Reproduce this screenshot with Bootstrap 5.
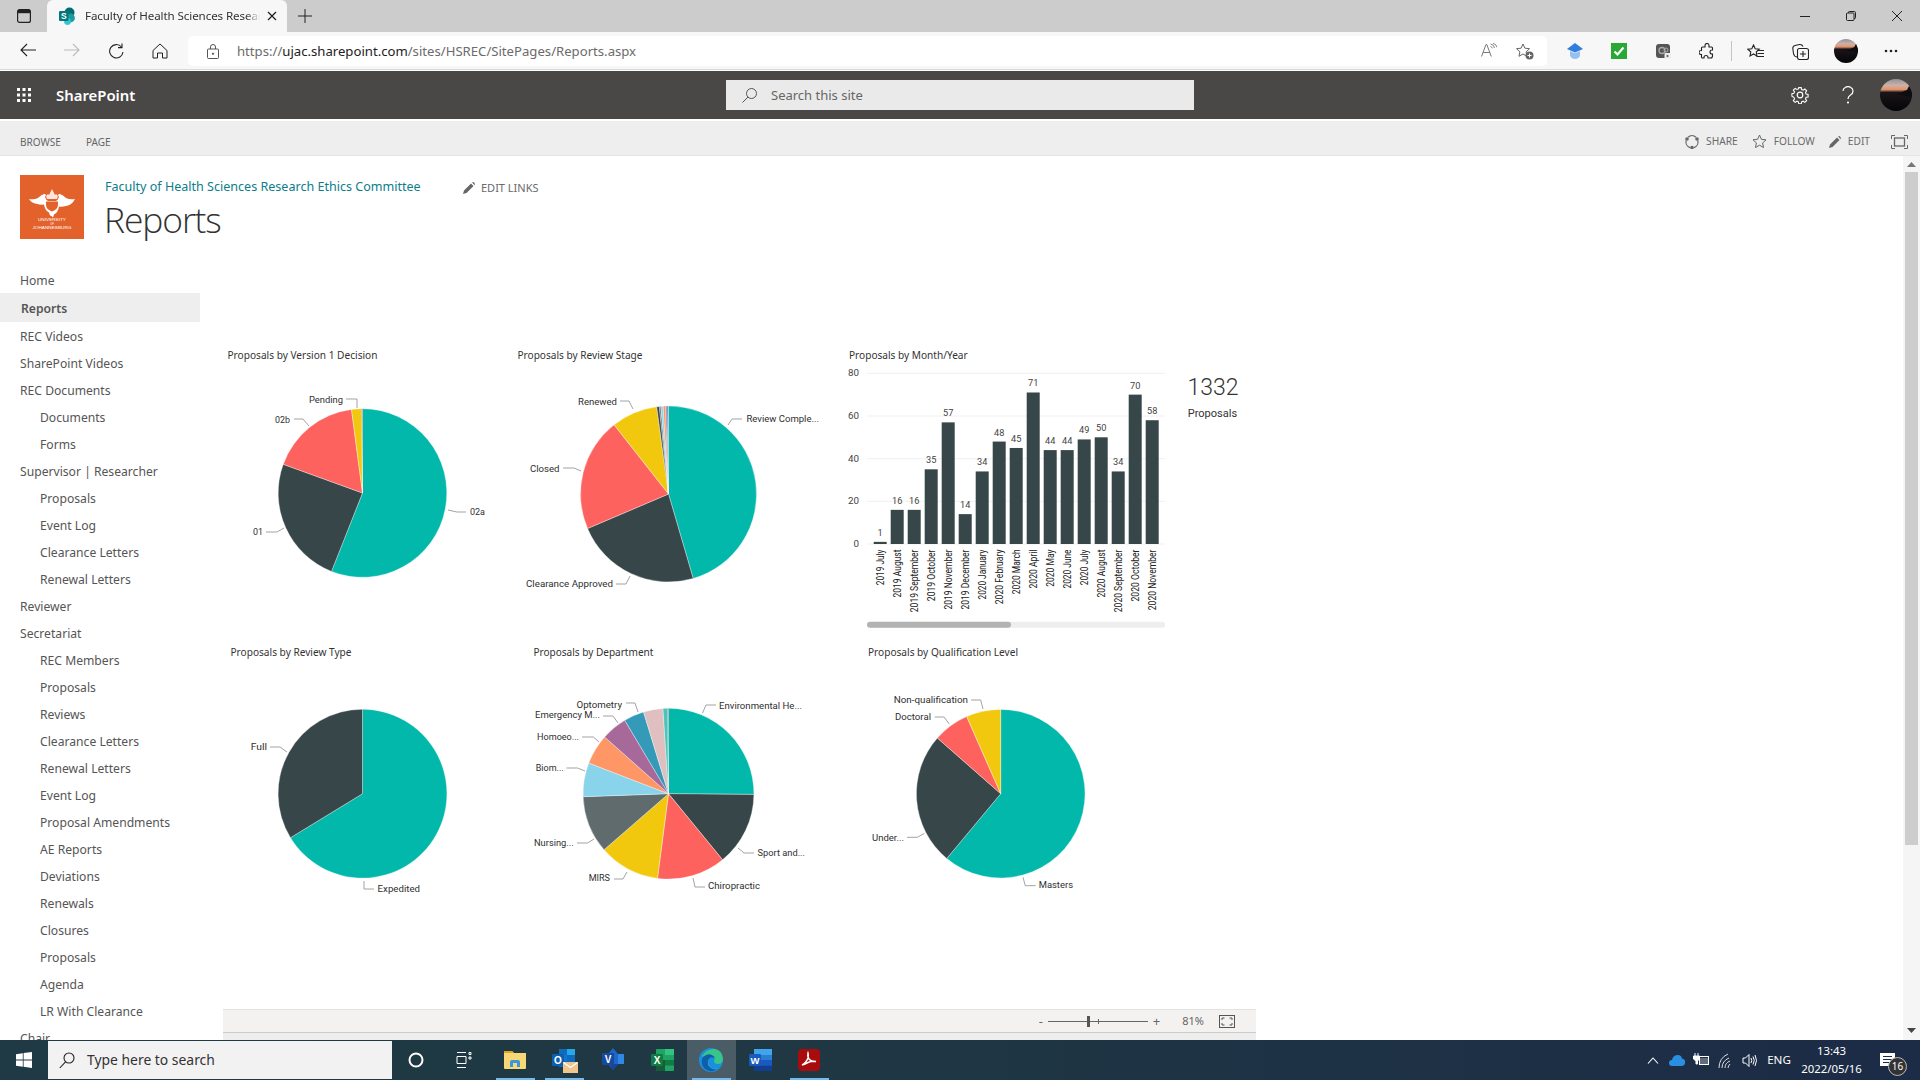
<!DOCTYPE html>
<html lang="en">
<head>
<meta charset="utf-8">
<title>Reports</title>
<link href="https://cdn.jsdelivr.net/npm/bootstrap@5.3.0/dist/css/bootstrap.min.css" rel="stylesheet">
<style>
html,body{height:100%;overflow:hidden;background:#fff}
body{font-family:"Noto Sans","Open Sans",sans-serif;color:#444;width:1920px;height:1080px}
svg{display:block;flex:none}
/* browser chrome */
.tabstrip{height:32px;background:#ccc}
.strip-btn{width:47px}
.brow-tab{width:240px;background:#f7f7f7;border-radius:6px 6px 0 0;padding-left:11px;font-size:11.6px;color:#333;letter-spacing:-.1px}
.brow-tab .tab-title{width:175px;margin-left:9px;white-space:nowrap;overflow:hidden;-webkit-mask-image:linear-gradient(90deg,#000 92%,transparent)}
.tab-close{margin-left:7px}
.newtab-btn{width:35px}
.win-btn{width:46px}
.toolbar{height:38px;background:#f7f7f7;border-bottom:1px solid #d9d9d9;padding-top:1px;padding-left:6px}
.tool-btn{width:44px}
.tool-btn2{width:45px}
.addr{width:1359px;height:30px;background:#fff;border-radius:5px;margin:0 6px}
.addr .lock{width:49px}
.addr .url{font-size:13.15px;color:#6b6b6b;white-space:nowrap;padding-top:2px}
.addr .url b{font-weight:400;color:#222}
.addr .addr-btn{width:36px}
.tool-div{width:4px}
.tool-div i{display:block;width:1px;height:20px;background:#c4c4c4;margin:0 auto}
/* sharepoint */
.sp-bar{height:48px;margin-top:1px;background:#4a4847;color:#fff}
.sp-left{width:726px}
.sp-waffle{width:48px}
.sp-brand{font-size:14.9px;font-weight:600;margin-left:8px;color:#fff;padding-top:1px}
.sp-search{width:468px;height:30px;background:#ebeaea;color:#666;font-size:13px;padding-left:16px;gap:14px}
.sp-search span{padding-top:2px}
.sp-btn{width:48px}
.ribbon{height:35px;margin-top:2px;background:#eee;border-bottom:1px solid #e4e4e4;font-size:10px;color:#666;padding-top:8px}
.rib-tab-a{margin-left:20px;width:66px}
.rib-act{gap:3px;font-size:10.2px;color:#6a6a6a}
.rib-act + .rib-act{margin-left:14px}
.rib-focus{margin-left:21px;margin-right:12px}
/* page */
.page-body{height:884px;overflow:hidden}
.page-main{width:1903px;overflow:hidden}
.page-head{height:111px;padding:19px 0 0 20px}
.site-text{margin-left:21px}
.site-name{font-size:12.55px;line-height:16px;color:#0d7d8c;white-space:nowrap;padding-top:4px;width:358px}
.page-name{font-family:"Open Sans",sans-serif;font-weight:300;font-size:35.4px;line-height:44px;color:#333;margin-top:1px;margin-left:-1px;letter-spacing:-1.100px}
.edit-links{font-size:11px;color:#6a6a6a;line-height:16px;gap:6px;padding-top:5px;height:21px}
.side-col{width:200px}
.side-nav{font-size:12.15px;color:#555}
.side-nav .nav-link{padding:0 0 0 20px;height:27px;line-height:27px;color:#555;white-space:nowrap}
.side-nav .nav-link.sub{padding-left:40px}
.side-nav .nav-link.on{background:#eee;height:29px;line-height:31px;padding-left:21px;font-weight:600;margin:-1px 0 1px}
.report-col{width:1033px;margin-left:23px}
.rep-bar{height:24px;background:#f3f2f1;border-top:1px solid #e3e3e3;border-bottom:1px solid #ccc;font-size:11px;color:#666;padding-right:21px}
.rep-sign{font-size:13px;line-height:1}
.rep-rest{height:20px;background:#eee}
.zoom-track{width:100px;height:1px;background:#666;margin:0 5px}
.zoom-knob{left:39px;top:-5px;width:3px;height:11px;background:#555}
.zoom-tick{left:50px;top:-2px;width:1px;height:5px;background:#666}
.zoom-pct{margin:0 15px 0 22px}
.scroll-col{width:17px;background:#f5f5f5}
.scroll-up{height:16px}
.scroll-thumb{height:673px;width:13px;background:#cdcdcd;margin:0 auto}
.scroll-down{margin-top:183px}
/* taskbar */
.taskbar{height:40px;background:linear-gradient(90deg,#1f3a44,#1f3843 40%,#1c2b46);color:#fff}
.start-btn{width:48px}
.task-search{width:344px;background:#f2f2f2;color:#333;font-size:13.9px;margin:1px 0;padding-left:11px;gap:12px}
.task-sys{width:48px}
.task-first{margin-left:2.5px}
.task-app{width:49px;height:40px}
.task-app.active{background:#4a5d66}
.task-app.run::after{content:"";position:absolute;left:5px;right:5px;bottom:0;height:2px;background:#76b9ed}
.tray-ic{width:24px}
.tray-eng{width:36px;font-size:11.6px;text-align:center}
.tray-clock{width:69px;font-size:11.4px;text-align:center;line-height:18px}
.tray-note{width:42px}
.tray-badge{right:1px;bottom:4px;width:19px;height:19px;border-radius:50%;background:#333;border:1px solid #bbb;font-size:10px;line-height:17px;text-align:center;color:#fff}
.tray-end{width:12px}
#canvas text{font-family:Roboto,"Liberation Sans",sans-serif}
#canvas text.ttl{font-family:"Noto Sans",sans-serif;font-size:10.3px;fill:#333}
</style>
</head>
<body>
<div class="d-flex flex-column">

<div class="tabstrip d-flex">
  <div class="strip-btn d-flex align-items-center justify-content-center">
    <svg width="14" height="14" viewBox="0 0 14 14" fill="none" stroke="#222" stroke-width="1.2"><rect x=".6" y=".6" width="12.8" height="12.8" rx="2"/><path d="M1 2.500h12" stroke-width="3.400"/></svg>
  </div>
  <div class="brow-tab d-flex align-items-center">
    <svg width="18" height="18" viewBox="0 0 18 18"><circle cx="11.500" cy="5.500" r="5" fill="#036c70"/><circle cx="12.500" cy="11" r="4.400" fill="#1a9ba1"/><circle cx="9.500" cy="14.500" r="3.400" fill="#37c6d0"/><rect x="1" y="4" width="9.500" height="10" rx="1" fill="#03787c"/><text x="5.700" y="12" font-size="8.500" font-weight="700" fill="#fff" text-anchor="middle" font-family="Liberation Sans">S</text></svg>
    <span class="tab-title">Faculty of Health Sciences Research Ethics Committee</span>
    <svg class="tab-close" width="10" height="10" viewBox="0 0 10 10" stroke="#222" stroke-width="1.300"><path d="M1 1l8 8M9 1l-8 8"/></svg>
  </div>
  <div class="newtab-btn d-flex align-items-center justify-content-center">
    <svg width="14" height="14" viewBox="0 0 14 14" stroke="#222" stroke-width="1"><path d="M7 0v14M0 7h14"/></svg>
  </div>
  <div class="ms-auto d-flex">
    <div class="win-btn d-flex align-items-center justify-content-center"><svg width="10" height="10" viewBox="0 0 10 10" stroke="#222"><path d="M0 5.500h10"/></svg></div>
    <div class="win-btn d-flex align-items-center justify-content-center"><svg width="10" height="10" viewBox="0 0 10 10" fill="none" stroke="#222"><rect x=".5" y="2" width="7.500" height="7.500" rx="1"/><path d="M2.500 2V1.300q0-.8.8-.8h5q1.200 0 1.200 1.200v5q0 .8-.8.8H8"/></svg></div>
    <div class="win-btn d-flex align-items-center justify-content-center"><svg width="10" height="10" viewBox="0 0 10 10" stroke="#222"><path d="M0 0l10 10M10 0L0 10"/></svg></div>
  </div>
</div>

<div class="toolbar d-flex align-items-center">
  <div class="d-flex">
    <div class="tool-btn d-flex justify-content-center"><svg width="16" height="14" viewBox="0 0 16 14" fill="none" stroke="#222" stroke-width="1.100"><path d="M16 7H1M7 1L1 7l6 6"/></svg></div>
    <div class="tool-btn d-flex justify-content-center"><svg width="16" height="14" viewBox="0 0 16 14" fill="none" stroke="#bbb" stroke-width="1.100"><path d="M0 7h15M9 1l6 6-6 6"/></svg></div>
    <div class="tool-btn d-flex justify-content-center"><svg width="16" height="16" viewBox="0 0 16 16" fill="none" stroke="#222" stroke-width="1.100"><path d="M13.500 4A6.700 6.700 0 1 0 15 9"/><path d="M14 .5V4.600H10"/></svg></div>
    <div class="tool-btn d-flex justify-content-center"><svg width="16" height="16" viewBox="0 0 16 16" fill="none" stroke="#222" stroke-width="1"><path d="M1 7.500L8 1l7 6.500V15h-4.500V10h-5v5H1z"/></svg></div>
  </div>
  <div class="addr d-flex align-items-center">
    <div class="lock d-flex justify-content-center"><svg width="12" height="15" viewBox="0 0 12 15" fill="none" stroke="#555"><rect x=".5" y="5" width="11" height="9.500" rx="1"/><path d="M3.500 5V3a2.500 2.500 0 0 1 5 0v2"/><circle cx="6" cy="9.700" r=".7" fill="#555"/></svg></div>
    <span class="url">https://<b>ujac.sharepoint.com</b>/sites/HSREC/SitePages/Reports.aspx</span>
    <div class="ms-auto d-flex me-1">
      <div class="addr-btn d-flex justify-content-center"><svg width="16" height="14" viewBox="0 0 16 14" fill="none" stroke="#777"><path d="M.5 13.500L5 1.500h.8l4.500 12M2.200 9.500h6.800"/><path d="M9.500 1q3.500.5 4 4M9.500 3.500q1.500.3 1.800 1.800M12 .3q3.500.8 3.800 4" stroke-width=".9"/></svg></div>
      <div class="addr-btn d-flex justify-content-center"><svg width="18" height="17" viewBox="0 0 18 17"><path d="M7 1l1.900 4.200 4.600.5-3.400 3.100.9 4.500L7 11l-4 2.300.9-4.500L.5 5.700l4.600-.5z" fill="none" stroke="#666"/><circle cx="13.500" cy="12.500" r="4" fill="#666"/><path d="M13.500 10.500v4M11.500 12.500h4" stroke="#fff"/></svg></div>
    </div>
  </div>
  <div class="tool-btn d-flex justify-content-center"><svg width="16" height="16" viewBox="0 0 16 16"><path d="M8 0l8 6-8 3.500L0 6z" fill="#2f7ddd"/><path d="M3 8l5 2.200L13 8v4a5 4 0 0 1-10 0z" fill="#94c0f2"/></svg></div>
  <div class="tool-btn d-flex justify-content-center"><svg width="16" height="16" viewBox="0 0 16 16"><rect width="16" height="16" fill="#2aa836"/><path d="M3.500 8.500l3 3 6-7" fill="none" stroke="#fff" stroke-width="2.200"/></svg></div>
  <div class="tool-btn d-flex justify-content-center"><svg width="15" height="15" viewBox="0 0 15 15"><rect width="14" height="14" rx="3" fill="#555"/><circle cx="6" cy="6.500" r="3" fill="none" stroke="#aaa" stroke-width="1.300"/><circle cx="10" cy="6" r="2" fill="none" stroke="#aaa"/><rect x="8.500" y="9" width="6.500" height="6" rx="1" fill="#eee"/><path d="M10.700 10.500l2.300 1.500-2.300 1.500z" fill="#555"/></svg></div>
  <div class="tool-btn d-flex justify-content-center"><svg width="16" height="16" viewBox="0 0 16 16" fill="none" stroke="#222" stroke-width="1.100"><path d="M6 2.500a2 2 0 0 1 4 0V4h2.500q1 0 1 1v2h-.5a2 2 0 0 0 0 4h.5v2q0 2-2 2H9v-.5a2 2 0 0 0-4 0v.5H3.500q-1 0-1-1v-2.500H2a2 2 0 0 1 0-4h.5V5q0-1 1-1H6z"/></svg></div>
  <div class="tool-div"><i></i></div>
  <div class="tool-btn2 d-flex justify-content-center"><svg width="17" height="15" viewBox="0 0 17 15" fill="none" stroke="#222" stroke-width="1.100"><path d="M6.500 1l1.700 3.700 4 .5-3 2.800.8 4-3.500-2-3.500 2 .8-4-3-2.800 4-.5z"/><path d="M11 6.500h6M10.500 9.500h6.500M9.500 12.500h7.500"/></svg></div>
  <div class="tool-btn2 d-flex justify-content-center"><svg width="17" height="17" viewBox="0 0 17 17" fill="none" stroke="#222" stroke-width="1.100"><rect x="5.500" y="5.500" width="11" height="11" rx="2"/><path d="M11 8v6M8 11h6M5 14Q2 13.500 1.500 10.500L.8 5.500Q.7 3 3 2.500l4.500-1q2.500-.3 3.500 2"/></svg></div>
  <div class="tool-btn2 d-flex justify-content-center"><svg width="24" height="24" viewBox="0 0 32 32"><defs><clipPath id="av1"><circle cx="16" cy="16" r="16"/></clipPath><linearGradient id="sky1" x1="0" y1="0" x2="0" y2="1"><stop offset="0" stop-color="#8f949c"/><stop offset=".2" stop-color="#cfb0a6"/><stop offset=".33" stop-color="#e2936a"/><stop offset=".42" stop-color="#1a1518"/><stop offset="1" stop-color="#050508"/></linearGradient></defs><g clip-path="url(#av1)"><rect width="32" height="32" fill="url(#sky1)"/><path d="M32 18V6l-3 1-2 4-3 1-3 2-6 1z" fill="#0d0d12"/></g></svg></div>
  <div class="tool-btn2 d-flex justify-content-center"><svg width="14" height="4" viewBox="0 0 14 4" fill="#222"><circle cx="2" cy="2" r="1.300"/><circle cx="7" cy="2" r="1.300"/><circle cx="12" cy="2" r="1.300"/></svg></div>
</div>

<div class="sp-bar d-flex align-items-center">
  <div class="sp-left d-flex align-items-center">
    <div class="sp-waffle d-flex justify-content-center"><svg width="16" height="16" viewBox="0 0 16 16" fill="#fff"><path d="M1 1h3v3H1zM6.500 1h3v3h-3zM12 1h3v3h-3zM1 6.500h3v3H1zM6.500 6.500h3v3h-3zM12 6.500h3v3h-3zM1 12h3v3H1zM6.500 12h3v3h-3zM12 12h3v3h-3z"/></svg></div>
    <span class="sp-brand">SharePoint</span>
  </div>
  <div class="sp-search d-flex align-items-center">
    <svg width="15" height="15" viewBox="0 0 15 15" fill="none" stroke="#555"><circle cx="9.500" cy="5.500" r="5"/><path d="M6 9L.5 14.500"/></svg>
    <span>Search this site</span>
  </div>
  <div class="ms-auto d-flex align-items-center">
    <div class="sp-btn d-flex justify-content-center"><svg width="18" height="18" viewBox="0 0 18 18" fill="none" stroke="#fff" stroke-width="1.200"><circle cx="9" cy="9" r="2.800"/><path d="M7.600 .8h2.800l.4 2.200 1.700.7 1.900-1.300 2 2-1.300 1.900.7 1.700 2.200.4v2.800l-2.200.4-.7 1.700 1.300 1.900-2 2-1.900-1.300-1.700.7-.4 2.200H7.600l-.4-2.200-1.700-.7-1.900 1.300-2-2 1.300-1.900-.7-1.700L0 10.400V7.600l2.200-.4.700-1.700-1.300-1.900 2-2 1.900 1.300 1.700-.7z" transform="translate(.9 .9) scale(.9)"/></svg></div>
    <div class="sp-btn d-flex justify-content-center"><svg width="12" height="18" viewBox="0 0 12 18" fill="none" stroke="#fff" stroke-width="1.200"><path d="M1 5a5 4.500 0 1 1 7.500 4Q6 10.500 6 13"/><circle cx="6" cy="16.500" r=".5" fill="#fff"/></svg></div>
    <div class="sp-btn d-flex justify-content-center"><svg width="32" height="32" viewBox="0 0 32 32"><defs><clipPath id="av2"><circle cx="16" cy="16" r="16"/></clipPath><linearGradient id="sky2" x1="0" y1="0" x2="0" y2="1"><stop offset="0" stop-color="#8f949c"/><stop offset=".2" stop-color="#cfb0a6"/><stop offset=".33" stop-color="#e2936a"/><stop offset=".42" stop-color="#1a1518"/><stop offset="1" stop-color="#050508"/></linearGradient></defs><g clip-path="url(#av2)"><rect width="32" height="32" fill="url(#sky2)"/><path d="M32 18V6l-3 1-2 4-3 1-3 2-6 1z" fill="#0d0d12"/></g></svg></div>
  </div>
</div>

<div class="ribbon d-flex align-items-center">
  <span class="rib-tab-a">BROWSE</span>
  <span>PAGE</span>
  <div class="ms-auto d-flex align-items-center">
    <div class="rib-act d-flex align-items-center"><svg width="14" height="14" viewBox="0 0 14 14" fill="none" stroke="#666" stroke-width="1.200"><path d="M3 2.200A6 6 0 0 1 11 2.200M12.800 5.500A6 6 0 0 1 9 12.600M5 12.600A6 6 0 0 1 1.200 5.500"/><g fill="#666" stroke="none"><circle cx="2" cy="4" r="1.800"/><circle cx="12" cy="4" r="1.800"/><circle cx="7" cy="12.500" r="1.800"/></g></svg><span class="ms-1">SHARE</span></div>
    <div class="rib-act d-flex align-items-center"><svg width="15" height="15" viewBox="0 0 15 15" fill="none" stroke="#666"><path d="M7.500 1l1.900 4.300 4.600.5-3.400 3.100.9 4.600-4-2.300-4 2.300.9-4.600L1 5.800l4.600-.5z"/></svg><span class="ms-1">FOLLOW</span></div>
    <div class="rib-act d-flex align-items-center"><svg width="12" height="12" viewBox="0 0 12 12" fill="#666"><path d="M0 12l1-3.500 7-7L10.500 4l-7 7zM9 .5l2.500 2.500 .5-.5Q12 1 10.500 0z"/></svg><span class="ms-1">EDIT</span></div>
    <div class="rib-focus"><svg width="17" height="14" viewBox="0 0 17 14" fill="none" stroke="#666"><path d="M.5 4V.5H4M13 .5h3.500V4M16.500 10v3.500H13M4 13.500H.5V10"/><rect x="3.500" y="3" width="10" height="8" stroke-width="1.300"/></svg></div>
  </div>
</div>

<div class="page-body d-flex">
  <div class="page-main">
    <div class="page-head d-flex align-items-start">
      <svg width="64" height="64" viewBox="0 0 64 64">
        <rect width="64" height="64" fill="#e3622c"/>
        <path d="M9 24q5 1 9-1 3-3 6-4 3-.5 1 3 1 3 3 4h8q2-1 3-4-2-3.500 1-3 3 1 6 4 4 2 9 1-3 6-9 7-4 1-7 .5-1 6-5 8l-1 3-1.500-1.500L30 40.500l-1-3q-4-2-5-8-3 .5-7-.5-6-1-8-5z" fill="#fff"/>
        <path d="M26 26.500h12v3q0 5-6 7-6-2-6-7z" fill="#e3622c"/>
        <path d="M26 21l2-2 1 1 3-6 3 6 1-1 2 2-1 3H27z" fill="#fff" opacity=".85"/>
        <g fill="#fff" text-anchor="middle" font-family="Liberation Sans, sans-serif" font-size="3.800">
          <text x="32" y="46" textLength="28" lengthAdjust="spacingAndGlyphs">UNIVERSITY</text>
          <text x="32" y="49.500" font-size="2.600">OF</text>
          <text x="32" y="53.500" textLength="39" lengthAdjust="spacingAndGlyphs">JOHANNESBURG</text>
        </g>
      </svg>
      <div class="site-text">
        <div class="d-flex">
          <div class="site-name">Faculty of Health Sciences Research Ethics Committee</div>
          <div class="edit-links d-flex align-items-center"><svg width="12" height="12" viewBox="0 0 12 12" fill="#666"><path d="M0 12l1-3.500 7-7L10.500 4l-7 7zM9 .5l2.500 2.500 .5-.5Q12 1 10.500 0z"/></svg><span>EDIT LINKS</span></div>
        </div>
        <div class="page-name">Reports</div>
      </div>
    </div>
    <div class="d-flex">
      <div class="side-col">
        <nav class="nav flex-column side-nav">
          <a class="nav-link" href="#">Home</a>
          <a class="nav-link on" href="#">Reports</a>
          <a class="nav-link" href="#">REC Videos</a>
          <a class="nav-link" href="#">SharePoint Videos</a>
          <a class="nav-link" href="#">REC Documents</a>
          <a class="nav-link sub" href="#">Documents</a>
          <a class="nav-link sub" href="#">Forms</a>
          <a class="nav-link" href="#">Supervisor | Researcher</a>
          <a class="nav-link sub" href="#">Proposals</a>
          <a class="nav-link sub" href="#">Event Log</a>
          <a class="nav-link sub" href="#">Clearance Letters</a>
          <a class="nav-link sub" href="#">Renewal Letters</a>
          <a class="nav-link" href="#">Reviewer</a>
          <a class="nav-link" href="#">Secretariat</a>
          <a class="nav-link sub" href="#">REC Members</a>
          <a class="nav-link sub" href="#">Proposals</a>
          <a class="nav-link sub" href="#">Reviews</a>
          <a class="nav-link sub" href="#">Clearance Letters</a>
          <a class="nav-link sub" href="#">Renewal Letters</a>
          <a class="nav-link sub" href="#">Event Log</a>
          <a class="nav-link sub" href="#">Proposal Amendments</a>
          <a class="nav-link sub" href="#">AE Reports</a>
          <a class="nav-link sub" href="#">Deviations</a>
          <a class="nav-link sub" href="#">Renewals</a>
          <a class="nav-link sub" href="#">Closures</a>
          <a class="nav-link sub" href="#">Proposals</a>
          <a class="nav-link sub" href="#">Agenda</a>
          <a class="nav-link sub" href="#">LR With Clearance</a>
          <a class="nav-link" href="#">Chair</a>
        </nav>
      </div>
      <div class="report-col">
        <svg id="canvas" width="1033" height="742" viewBox="223 267 1033 742" xmlns="http://www.w3.org/2000/svg"></svg>
        <div class="rep-bar d-flex align-items-center justify-content-end">
          <span class="rep-sign">-</span>
          <div class="zoom-track position-relative"><div class="zoom-knob position-absolute"></div><div class="zoom-tick position-absolute"></div></div>
          <span class="rep-sign">+</span>
          <span class="zoom-pct">81%</span>
          <svg width="16" height="13" viewBox="0 0 16 13" fill="none" stroke="#555"><rect x=".5" y=".5" width="15" height="12"/><path d="M3 5V3h2.500M10.500 3H13v2M13 8v2h-2.500M5.500 10H3V8"/></svg>
        </div>
        <div class="rep-rest"></div>
      </div>
    </div>
  </div>
  <div class="scroll-col">
    <div class="scroll-up d-flex justify-content-center align-items-center"><svg width="9" height="5" viewBox="0 0 9 5" fill="#777"><path d="M0 5l4.500-5L9 5z"/></svg></div>
    <div class="scroll-thumb"></div>
    <div class="scroll-down d-flex justify-content-center"><svg width="9" height="5" viewBox="0 0 9 5" fill="#444"><path d="M0 0l4.500 5L9 0z"/></svg></div>
  </div>
</div>

<div class="taskbar d-flex">
  <div class="start-btn d-flex align-items-center justify-content-center"><svg width="16" height="16" viewBox="0 0 16 16" fill="#fff"><path d="M0 2.200l6.800-1v6.400H0zM7.600 1.100L16 0v7.600H7.600zM0 8.400h6.800v6.400L0 13.800zM7.600 8.400H16V16l-8.400-1.200z"/></svg></div>
  <div class="task-search d-flex align-items-center">
    <svg width="16" height="17" viewBox="0 0 16 17" fill="none" stroke="#222" stroke-width="1.100"><circle cx="10" cy="6" r="5"/><path d="M6.500 9.800L.8 16"/></svg>
    <span>Type here to search</span>
  </div>
  <div class="task-sys d-flex align-items-center justify-content-center"><svg width="16" height="16" viewBox="0 0 16 16" fill="none" stroke="#fff" stroke-width="2"><circle cx="8" cy="8" r="6.500"/></svg></div>
  <div class="task-sys d-flex align-items-center justify-content-center"><svg width="16" height="16" viewBox="0 0 16 16" fill="none" stroke="#fff"><path d="M1 .5h9M1 15.500h9M1 4.500h9v7H1zM13 .5h2v2h-2zM13 5h2v2h-2z"/></svg></div>
  <div class="d-flex task-first">
    <div class="task-app run position-relative d-flex align-items-center justify-content-center"><svg width="24" height="22" viewBox="0 0 24 22"><path d="M1 2h8l2 2h12v15q0 1-1 1H2q-1 0-1-1z" fill="#f8d775"/><path d="M1 2h8l2 2H1z" fill="#e0a526"/><path d="M7 18v-5q0-2 2-2h6q2 0 2 2v5h-3v-4h-4v4z" fill="#3a96dd"/></svg></div>
    <div class="task-app run position-relative d-flex align-items-center justify-content-center"><svg width="28" height="26" viewBox="0 0 28 26"><rect x="9" y="2" width="16" height="18" fill="#0f6cbd"/><path d="M17 2h8v6h-8z" fill="#28a8ea"/><path d="M9 8h8v6H9z" fill="#0a78d4"/><rect x="2" y="7" width="12" height="12" rx="1" fill="#0a5fb0"/><text x="8" y="16.500" fill="#fff" font-size="10" font-weight="700" text-anchor="middle" font-family="Liberation Sans">O</text><rect x="13" y="15" width="15" height="11" fill="#f0c58e"/><path d="M13.500 15.500l7 5 7-5" fill="none" stroke="#fff" stroke-width="1.200"/></svg></div>
    <div class="task-app position-relative d-flex align-items-center justify-content-center"><svg width="24" height="24" viewBox="0 0 24 24"><path d="M12 0l5 6h6v10h-6l-5 6-5-6V6z" fill="#1e66c9"/><path d="M17 6h6v10h-6z" fill="#2f88e6"/><path d="M8 16l4 6 5-6z" fill="#16469a"/><rect x="1" y="5" width="12" height="12" rx="1" fill="#154a9e"/><text x="7" y="14.500" fill="#fff" font-size="10" font-weight="700" text-anchor="middle" font-family="Liberation Sans">V</text></svg></div>
    <div class="task-app d-flex align-items-center justify-content-center"><svg width="24" height="22" viewBox="0 0 24 22"><rect x="6" y="0" width="18" height="22" rx="1" fill="#21a366"/><path d="M15 0h9v6h-9z" fill="#33c481"/><path d="M6 11h9v11H6z" fill="#185c37"/><path d="M15 11h9v5.500h-9z" fill="#107c41"/><rect x="1" y="5" width="12" height="12" rx="1" fill="#107c41"/><text x="7" y="14.500" fill="#fff" font-size="10" font-weight="700" text-anchor="middle" font-family="Liberation Sans">X</text></svg></div>
    <div class="task-app active run position-relative d-flex align-items-center justify-content-center"><svg width="24" height="24" viewBox="0 0 24 24"><circle cx="12" cy="12" r="12" fill="#1a8fdc"/><path d="M3 8Q8 0 16 1q7 1 8 10-.3 5-5 5-4 0-4-3 0-2 1-3-3-4-7-2-4 2-6 0z" fill="#37c58a"/><path d="M16 10q-5-2-7 2-1 5 3 8 3 2 6 1-7 5-13-1-4-5-1-11 7-6 12 1z" fill="#0f5ea8"/><path d="M9 13q-1 6 5 8 3 .5 5-1-5 2-8-1-2-3-2-6z" fill="#2ab0e8"/></svg></div>
    <div class="task-app d-flex align-items-center justify-content-center"><svg width="24" height="22" viewBox="0 0 24 22"><rect x="6" y="0" width="18" height="22" rx="1" fill="#2b7cd3"/><path d="M6 0h18v6H6z" fill="#41a5ee"/><path d="M6 11h18v5.500H6z" fill="#185abd"/><path d="M6 16.500h18V22H6z" fill="#103f91"/><rect x="1" y="5" width="12" height="12" rx="1" fill="#185abd"/><text x="7" y="14.500" fill="#fff" font-size="9.500" font-weight="700" text-anchor="middle" font-family="Liberation Sans">W</text></svg></div>
    <div class="task-app run position-relative d-flex align-items-center justify-content-center"><svg width="22" height="22" viewBox="0 0 22 22"><rect width="22" height="22" rx="4" fill="#a90c0c"/><path d="M4 16q4-2 6-7 .7-3 0-5-1 3 1 6 2 2.500 7 2.500-4-.8-8 1-4 2-6 2.500z" fill="none" stroke="#fff" stroke-width="1.500"/></svg></div>
  </div>
  <div class="ms-auto d-flex align-items-center">
    <div class="tray-ic d-flex justify-content-center"><svg width="12" height="7" viewBox="0 0 12 7" fill="none" stroke="#fff" stroke-width="1.100"><path d="M1 6.500l5-5.500 5 5.500"/></svg></div>
    <div class="tray-ic d-flex justify-content-center"><svg width="16" height="12" viewBox="0 0 16 12"><path d="M3 12A3 3 0 0 1 3 6q1-5 6-5 3.500 0 4 3.500A3.800 3.800 0 0 1 13 12z" fill="#2a8fe0"/></svg></div>
    <div class="tray-ic d-flex justify-content-center"><svg width="16" height="14" viewBox="0 0 16 14" fill="none" stroke="#fff"><rect x="6.500" y="3.500" width="9" height="8"/><path d="M7 5h8v6H7z" fill="#fff" opacity=".3" stroke="none"/><path d="M2 0v3M5 0v3M.5 3h6v3l-2 2v3H3V8L.5 6z" fill="#fff"/></svg></div>
    <div class="tray-ic d-flex justify-content-center"><svg width="15" height="15" viewBox="0 0 15 15" fill="none" stroke="#ddd"><path d="M1 15Q1 5 10 1M4 15q0-7 7-10M7 15q0-5 5-7M10 15q0-2 2-4"/></svg></div>
    <div class="tray-ic d-flex justify-content-center"><svg width="15" height="15" viewBox="0 0 15 15" fill="none" stroke="#fff"><path d="M1 5h2.500L7 1.500v12L3.500 10H1zM9 5q1.500 2.500 0 5M11 3.500q2.500 4 0 8M13 2q3 5.500 0 11"/></svg></div>
    <div class="tray-eng">ENG</div>
    <div class="tray-clock"><div>13:43</div><div>2022/05/16</div></div>
    <div class="tray-note d-flex justify-content-center position-relative align-self-stretch align-items-center"><svg width="15" height="15" viewBox="0 0 15 15"><path d="M0 0h15v13H0z" fill="#fff"/><path d="M3 3.500h9M3 6.500h9M3 9.500h6" stroke="#1d2c45" stroke-width="1.200"/></svg><div class="tray-badge position-absolute">16</div></div>
    <div class="tray-end"></div>
  </div>
</div>

</div>
<script>
(function(){
var NS="http://www.w3.org/2000/svg",cv=document.getElementById("canvas");
function el(n,a,t){var e=document.createElementNS(NS,n);for(var k in a)e.setAttribute(k,a[k]);if(t!=null)e.textContent=t;cv.appendChild(e);return e}
var T="#01B8AA",D="#374649",R="#FD625E",Y="#F2C80F",G="#5F6B6D",B="#8AD4EB",O="#FE9666",P="#A66999",U="#3599B8",K="#DFBFBF",W="#4AC5BB";
function pie(cx,cy,r,s){var a0=0;s.forEach(function(x){var a1=x[1],p0=a0*Math.PI/180,p1=a1*Math.PI/180,l=(a1-a0)>180?1:0;
 el("path",{d:"M"+cx+" "+cy+"L"+(cx+r*Math.sin(p0))+" "+(cy-r*Math.cos(p0))+"A"+r+" "+r+" 0 "+l+" 1 "+(cx+r*Math.sin(p1))+" "+(cy-r*Math.cos(p1))+"Z",fill:x[0],stroke:"#fff","stroke-width":".35"});a0=a1})}
function ttl(x,y,w,t){el("text",{x:x,y:y,"class":"ttl","dominant-baseline":"central",textLength:w,lengthAdjust:"spacingAndGlyphs"},t)}
function lab(x,w,y,t,pts){el("polyline",{points:pts,fill:"none",stroke:"#999","stroke-width":".9"});
 el("text",{x:x,y:y,"dominant-baseline":"central","font-size":"9.8",fill:"#2f2f2f",textLength:w,lengthAdjust:"spacingAndGlyphs"},t)}

ttl(227.500,355,150,"Proposals by Version 1 Decision");
pie(362.500,493,84.300,[[T,201.600],[D,289.900],[R,352.500],[Y,359.500],[D,360]]);
lab(309,34,399,"Pending","346,399 357,399 357,408");
lab(275,15,419,"02b","294,419 303,419 309,426");
lab(253,10,531,"01","266,532 277,532 284,528");
lab(470,15,511,"02a","448,510 457,512 466,512");

ttl(517.500,355,125,"Proposals by Review Stage");
pie(668.500,494,88,[[T,163.700],[D,246.900],[R,321.800],[Y,352.300],[D,354],[G,355],[B,356.500],[O,358],[P,359],[U,360]]);
lab(578,39,401,"Renewed","620,401 629,401 633,409");
lab(530,29.500,468,"Closed","563,468 574,468 581,471");
lab(526,87,583,"Clearance Approved","616,584 626,584 630,576");
lab(746.500,72.500,418,"Review Comple...","728,425 732,419 742,419");

ttl(849,355,118.700,"Proposals by Month/Year");
[[80,373.300],[60,416],[40,458.700],[20,501.300],[0,544]].forEach(function(g){
 el("line",{x1:867,x2:1165,y1:g[1],y2:g[1],stroke:"#f0f0f0"});
 el("text",{x:859,y:g[1]-.6,"text-anchor":"end","dominant-baseline":"central","font-size":"9.800",fill:"#444"},g[0])});
var bars=[["2019 July",1,35.700],["2019 August",16,48],["2019 September",16,62.700],["2019 October",35,51.700],["2019 November",57,60],["2019 December",14,60],["2020 January",34,50],["2020 February",48,54.700],["2020 March",45,44.700],["2020 April",71,39],["2020 May",44,37.300],["2020 June",44,39],["2020 July",49,35.700],["2020 August",50,48],["2020 September",34,62.700],["2020 October",70,52],["2020 November",58,60.700]];
bars.forEach(function(b,i){var x=873.700+17*i,h=b[1]*2.134,c=x+6.500;
 el("rect",{x:x,y:544-h,width:13,height:h,fill:D});
 el("text",{x:c,y:544-h-9.500,"text-anchor":"middle","dominant-baseline":"central","font-size":"9.200",fill:"#444"},b[1]);
 el("text",{x:0,y:0,"font-size":"10","text-anchor":"end","dominant-baseline":"central",fill:"#222",textLength:b[2],lengthAdjust:"spacingAndGlyphs",transform:"translate("+c+" 549.500) rotate(-90)"},b[0]);
});
el("rect",{x:867,y:621.700,width:298,height:6,rx:3,fill:"#eee"});
el("rect",{x:867,y:621.700,width:144,height:6,rx:3,fill:"#b3b3b3"});
el("text",{x:1187.500,y:387,"font-size":"24","font-weight":"300","dominant-baseline":"central",fill:"#333",textLength:51,lengthAdjust:"spacingAndGlyphs"},"1332");
el("text",{x:1187.700,y:413,"font-size":"11","dominant-baseline":"central",fill:"#333",textLength:49.500,lengthAdjust:"spacingAndGlyphs"},"Proposals");

ttl(230.500,652,121,"Proposals by Review Type");
pie(362.500,793.700,84.400,[[T,238.600],[D,360]]);
lab(250.700,16.300,746.700,"Full","270,747 280,747 287,752");
lab(377.600,42.400,888.700,"Expedited","364,881 364,889 374,889");

ttl(533.400,652,120,"Proposals by Department");
pie(668.500,793.700,85.400,[[T,90.500],[D,140.700],[R,187.400],[Y,229],[G,268],[B,291],[O,311.600],[P,329.200],[U,343],[K,356.300],[W,359.500],[D,360]]);
lab(719,83,705,"Environmental He...","702.500,713 706,705 716,705");
lab(757.500,47.500,852.700,"Sport and...","738,848 744,853 754,853");
lab(708,52,885.700,"Chiropractic","693,878 695,887 705,887");
lab(588.700,21.300,877,"MIRS","614,879 623,879 627,872");
lab(534,39.600,842.700,"Nursing...","577,843 587.500,843 594,839");
lab(535.700,28,767.700,"Biom...","566.500,768 577.600,768 585,771");
lab(537,42,736.700,"Homoeo...","582,737 593.400,737 599,742");
lab(535,65,714.700,"Emergency M...","603,716 613,716 618,723");
lab(576.500,45.500,704,"Optometry","626,703 635,703 638,712");

ttl(868,652,150,"Proposals by Qualification Level");
pie(1000.700,793.700,84.300,[[T,219.800],[D,311.300],[R,336.200],[Y,360]]);
lab(893.700,74.300,699.700,"Non-qualification","971,700 980.700,700 983,709");
lab(895,36,716.700,"Doctoral","934.700,717 944,717 949.300,724");
lab(872,32,837,"Under...","907,837.300 917.300,837.300 924.300,833.300");
lab(1038.700,34.300,884.700,"Masters","1023,877.300 1025.300,885.700 1035.700,885.700");
})();
</script>
<script src="https://cdn.jsdelivr.net/npm/bootstrap@5.3.0/dist/js/bootstrap.bundle.min.js"></script>
</body>
</html>
